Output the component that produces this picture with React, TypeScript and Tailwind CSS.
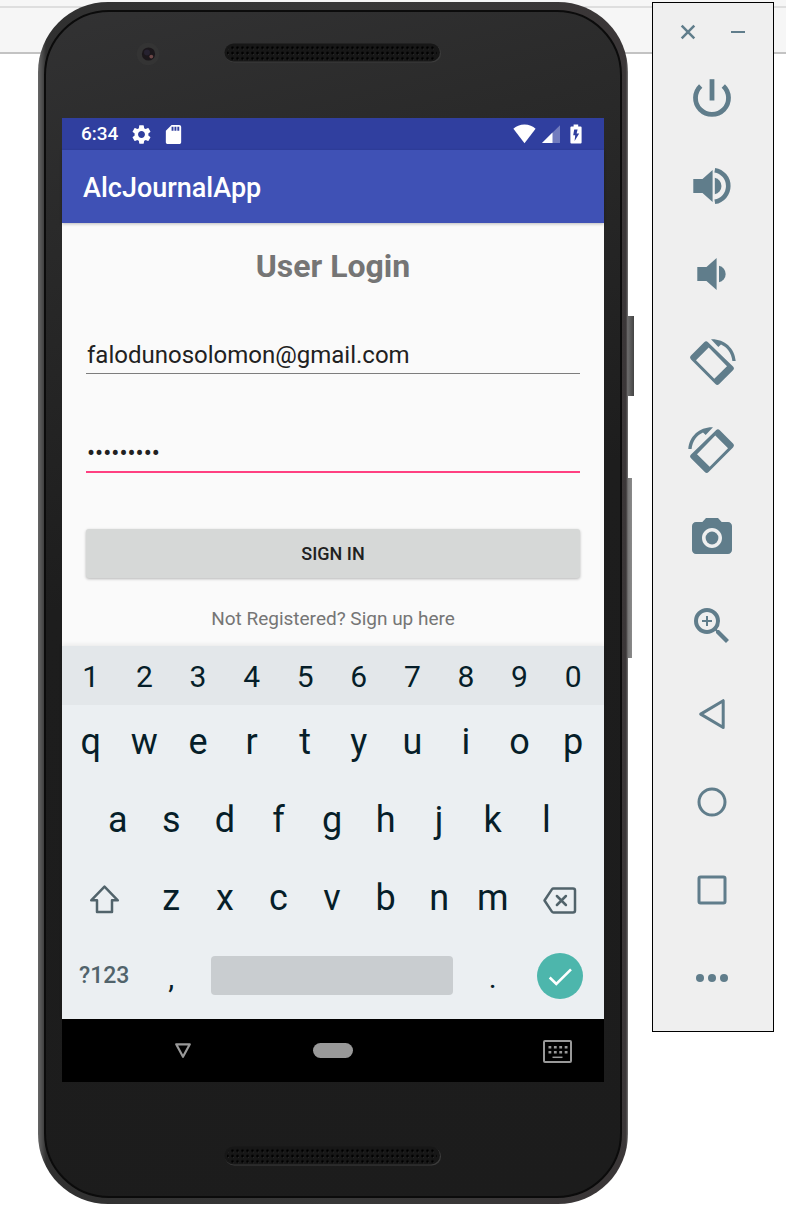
import type { ReactNode } from "react";
import { MdCameraAlt, MdSdCard, MdSettings, MdZoomIn } from "react-icons/md";

function Speaker() {
  return (
    <svg width="218" height="20" viewBox="0 0 218 20" aria-hidden="true">
      <defs>
        <pattern id="mesh" width="5" height="5.4" patternUnits="userSpaceOnUse" x="1" y="2">
          <circle cx="2.5" cy="2.7" r="1.3" fill="#000" />
          <circle cx="3.4" cy="3.8" r="0.5" fill="#333" />
        </pattern>
      </defs>
      <rect x="1" y="1.4" width="216" height="18" rx="9" fill="#3c3c3c" />
      <rect x="0.5" y="0.5" width="215.5" height="18" rx="9" fill="#171717" />
      <rect x="3" y="2" width="210" height="16" rx="8" fill="url(#mesh)" />
    </svg>
  );
}

function Camera() {
  return (
    <svg width="24" height="24" viewBox="0 0 24 24" aria-hidden="true">
      <circle cx="12" cy="12" r="11.3" fill="#343434" />
      <circle cx="12.5" cy="12" r="6.6" fill="#1b171b" />
      <circle cx="11" cy="10.5" r="3" fill="#262230" />
      <circle cx="15.3" cy="14.6" r="1.9" fill="#6d4747" />
    </svg>
  );
}

function StatusBar() {
  return (
    <div className="flex h-8 items-center bg-[#303f9f] pl-[19px] pr-[22px] text-white">
      <span className="text-[19px] font-medium leading-6">6:34</span>
      <MdSettings size={23} className="ml-3" aria-hidden="true" />
      <MdSdCard size={23} className="ml-[9px]" aria-hidden="true" />
      <div className="ml-auto flex items-center gap-[6px]">
        <svg width="23" height="20" viewBox="0 0 23 20" aria-hidden="true">
          <path d="M11.5 0.6C7 .6 3 2.200 .4 4.800L11.500 19.200 22.600 4.800C20 2.200 16 .600 11.500 .600z" fill="#fff" />
        </svg>
        <svg width="18" height="20" viewBox="0 0 18 20" aria-hidden="true">
          <path d="M18 1.200V19H0z" fill="#fff" fillOpacity=".32" />
          <path d="M10.500 8.600V19H0z" fill="#fff" />
        </svg>
        <svg className="ml-1" width="12" height="20" viewBox="0 0 12 20" aria-hidden="true">
          <path d="M3.600 0.500h4.600v2H10.600q1 0 1 1V18.500q0 1-1 1H1.400q-1 0-1-1V3.500q0-1 1-1H3.600z" fill="#fff" />
          <path d="M7.600 5.500H4.200L3.200 11.300H5.200L4.600 17 9.200 9.600H6.600z" fill="#303f9f" />
        </svg>
      </div>
    </div>
  );
}

function LoginForm() {
  return (
    <form className="flex flex-col bg-[#fafafa] px-6 pb-[15px] pt-6" onSubmit={(e) => e.preventDefault()}>
      <h1 className="text-center text-[32px] font-bold leading-[38px] text-[#757575]">User Login</h1>
      <input
        type="email"
        aria-label="Email"
        defaultValue="falodunosolomon@gmail.com"
        className="mt-[51px] h-[38px] w-full rounded-none border-b border-[#7d7d7d] bg-transparent pl-px text-2xl text-[#212121] outline-none"
      />
      <input
        type="password"
        aria-label="Password"
        defaultValue="solomon12"
        className="mt-[61px] h-[38px] w-full rounded-none border-b-2 border-[#ff4081] bg-transparent pl-px text-2xl text-[#212121] outline-none"
      />
      <button
        type="submit"
        className="mt-14 h-[49px] w-full rounded-[3px] bg-[#d6d8d7] text-lg font-medium text-[#212121] shadow-[0_1px_3px_rgba(0,0,0,0.28)]"
      >
        SIGN IN
      </button>
      <a href="#signup" className="mt-[29px] self-center text-[19px] leading-6 text-[#757575]">
        Not Registered? Sign up here
      </a>
    </form>
  );
}

function Key({ label }: { label: string }) {
  return (
    <button type="button" className="h-full min-w-0 flex-1">
      {label}
    </button>
  );
}

function Keyboard() {
  return (
    <div className="bg-[#ebeff2] pb-1 text-[36px] leading-none text-[#061e29] shadow-[0_-2px_4px_rgba(0,0,0,0.06)]">
      <div className="flex h-[59px] items-center bg-[#e3e7ea] pb-px pl-[2px] pr-1 pt-1 text-[30px]">
        {"1234567890".split("").map((k) => (
          <Key key={k} label={k} />
        ))}
      </div>
      <div className="flex h-[76px] pb-[2px] pl-[2px] pr-1">
        {"qwertyuiop".split("").map((k) => (
          <Key key={k} label={k} />
        ))}
      </div>
      <div className="flex h-[78px] pl-[29px] pr-[31px]">
        {"asdfghjkl".split("").map((k) => (
          <Key key={k} label={k} />
        ))}
      </div>
      <div className="flex h-[78px] pl-[2px] pr-1">
        <button type="button" aria-label="Shift" className="flex w-[15%] items-center justify-center">
          <svg width="40" height="40" viewBox="0 0 40 40" fill="none" stroke="#51636b" strokeWidth="2.500" strokeLinejoin="round">
            <path d="M20.500 8.700L33.800 22.300H28V34H13V22.300H7.200z" />
          </svg>
        </button>
        {"zxcvbnm".split("").map((k) => (
          <Key key={k} label={k} />
        ))}
        <button type="button" aria-label="Delete" className="flex w-[15%] items-center justify-center">
          <svg width="40" height="40" viewBox="0 1 40 40" fill="none" stroke="#51636b" strokeWidth="2.500" strokeLinejoin="round" strokeLinecap="round">
            <path d="M13.500 11.500H33q2 0 2 2V33.500q0 2-2 2H13.500q-1 0-1.600-.9L4.500 23.500 11.900 12.400q.6-.9 1.600-.9z" />
            <path d="M16.900 19l9 9M25.900 19l-9 9" />
          </svg>
        </button>
      </div>
      <div className="flex h-[78px] pb-px pl-[2px] pr-1">
        <button type="button" className="w-[15%] text-[23px] font-medium text-[#51636b]">
          ?123
        </button>
        <button type="button" className="w-[10%] pt-1 text-[30px]">
          ,
        </button>
        <div className="flex w-1/2 items-center px-[13px]">
          <button type="button" aria-label="Space" className="h-[39px] w-full rounded-[4px] bg-[#c9cdd0]" />
        </div>
        <button type="button" className="w-[10%] pt-1 text-[30px]">
          .
        </button>
        <div className="flex w-[15%] items-center justify-center">
          <button type="button" aria-label="Done" className="flex size-[46px] items-center justify-center rounded-full bg-[#4db6ac]">
            <svg width="46" height="46" viewBox="0 0 46 46" fill="none" stroke="#fff" strokeWidth="2.600">
              <path d="M12.700 24.500L19.300 31 34 16.300" />
            </svg>
          </button>
        </div>
      </div>
    </div>
  );
}

function NavBar() {
  return (
    <div className="grid h-[63px] grid-cols-[1fr_auto_1fr] items-center bg-black pr-px">
      <button type="button" aria-label="Hide keyboard" className="ml-[112px] justify-self-start">
        <svg width="18" height="18" viewBox="0 0 18 18" fill="none" stroke="#999" strokeWidth="2.200" strokeLinejoin="round">
          <path d="M2.200 2.300H15.800L9 14.800z" />
        </svg>
      </button>
      <button type="button" aria-label="Home" className="h-[15px] w-10 rounded-full bg-[#999]" />
      <button type="button" aria-label="Switch keyboard" className="mr-[30px] justify-self-end pt-[2px]">
        <svg width="31" height="25" viewBox="0 0 31 25" fill="none" stroke="#999">
          <rect x="2" y="2" width="27" height="21" rx="1" strokeWidth="2" />
          <path d="M6.500 8.200H26M6.500 13.200H26" strokeWidth="2.600" strokeDasharray="2.800 2.600" />
          <path d="M10.500 18.300H20.500" strokeWidth="1.500" />
        </svg>
      </button>
    </div>
  );
}

function Phone() {
  return (
    <div className="relative min-w-0 flex-1">
      <div className="absolute -right-[6px] top-[314px] h-20 w-2 bg-linear-to-r from-[#777] to-[#444]" />
      <div className="absolute -right-1 top-[476px] h-[180px] w-2 bg-linear-to-r from-[#666] to-[#8a8a8a]" />
      <div className="relative rounded-[70px] bg-[linear-gradient(90deg,#666_0,#4e4e4e_4px,#303030_8px,#383838_50%,#3a3637_582px,#3b3738_588px,#777_590px)] px-[6px] pb-[6px] pt-2">
        <div className="rounded-[65px] border-2 border-[#0b0b0b] bg-[linear-gradient(165deg,#323233_0,#2a2a2a_16%,#1d1d1d_45%,#1c1c1c_100%)] px-4">
          <div className="grid h-[106px] grid-cols-[1fr_auto_1fr] items-start pt-[30px]">
            <div className="pl-[74px]">
              <Camera />
            </div>
            <div className="pt-px">
              <Speaker />
            </div>
          </div>
          <main>
            <StatusBar />
            <header className="relative flex h-[73px] items-center bg-[#3f51b5] px-[21px] pt-[2px] shadow-[0_1px_3px_rgba(0,0,0,0.25)]">
              <span className="text-[27px] font-medium leading-8 text-white">AlcJournalApp</span>
            </header>
            <LoginForm />
            <Keyboard />
            <NavBar />
          </main>
          <div className="flex h-[114px] justify-center pt-16">
            <Speaker />
          </div>
        </div>
      </div>
    </div>
  );
}

const rotatePath = (
  <>
    <path
      fill="currentColor"
      fillRule="evenodd"
      d="M16.200 4.200q1.900-1.900 3.800 0L45 28.400q1.900 1.900 0 3.800L31.200 46q-1.900 1.900-3.800 0L3 21.400q-1.900-1.900 0-3.800zM20.700 9.500L8 22.200 26.300 40.800 39 28.200z"
    />
    <path fill="currentColor" d="M23 1.300C36 .8 46.800 10 47.700 23H44.400C43.600 15.200 39 9.200 33 6.500L30.300 9z" />
  </>
);

const speaker = "M5.300 17H14.500L24.600 8V40L14.500 31H5.300z";

const tools: { label: string; icon: ReactNode }[] = [
  {
    label: "Power",
    icon: (
      <g fill="none" stroke="currentColor" strokeWidth="4.800">
        <path d="M24 5.200V26.500" />
        <path d="M12.700 11.900A16.500 16.500 0 1 0 35.300 11.900" />
      </g>
    ),
  },
  {
    label: "Volume up",
    icon: (
      <>
        <path d={speaker} fill="currentColor" />
        <path d="M26.800 15.700a8.500 8.500 0 0 1 0 16.600z" fill="currentColor" />
        <path d="M26.800 8.200a16 16 0 0 1 0 31.600" fill="none" stroke="currentColor" strokeWidth="4.600" />
      </>
    ),
  },
  {
    label: "Volume down",
    icon: (
      <g transform="translate(4 0)" fill="currentColor">
        <path d={speaker} />
        <path d="M27 15.700a8.500 8.500 0 0 1 0 16.600z" />
      </g>
    ),
  },
  { label: "Rotate left", icon: rotatePath },
  { label: "Rotate right", icon: <g transform="matrix(-1 0 0 1 48 0)">{rotatePath}</g> },
  { label: "Take screenshot", icon: <MdCameraAlt size={48} /> },
  { label: "Zoom", icon: <MdZoomIn size={48} /> },
  {
    label: "Back",
    icon: <path d="M35.200 10.700V37.500L12.700 24.100z" fill="none" stroke="currentColor" strokeWidth="3" strokeLinejoin="round" />,
  },
  { label: "Home", icon: <circle cx="24" cy="24" r="13" fill="none" stroke="currentColor" strokeWidth="3" /> },
  {
    label: "Overview",
    icon: <rect x="11" y="11" width="26" height="26" rx="1.500" fill="none" stroke="currentColor" strokeWidth="3" />,
  },
  {
    label: "More",
    icon: (
      <g fill="currentColor">
        <circle cx="12" cy="24" r="4" />
        <circle cx="24" cy="24" r="4" />
        <circle cx="36" cy="24" r="4" />
      </g>
    ),
  },
];

function Toolbar() {
  return (
    <aside className="flex w-[122px] shrink-0 flex-col items-center border border-black bg-[#efefef] pb-[29px] pr-[2px] pt-[21px] text-[#607d8b]">
      <div className="flex gap-[34px] pl-[2px]">
        <button type="button" aria-label="Close">
          <svg width="16" height="16" viewBox="0 0 16 16" stroke="currentColor" strokeWidth="2.500">
            <path d="M1.700 1.700L14.300 14.300M14.300 1.700L1.700 14.300" />
          </svg>
        </button>
        <button type="button" aria-label="Minimize">
          <svg width="16" height="16" viewBox="0 0 16 16" stroke="currentColor" strokeWidth="2">
            <path d="M1 8H15" />
          </svg>
        </button>
      </div>
      <div className="mt-[34px] flex flex-col gap-10">
        {tools.map((t) => (
          <button key={t.label} type="button" aria-label={t.label} className="size-12">
            <svg className="block" width="48" height="48" viewBox="0 0 48 48">
              {t.icon}
            </svg>
          </button>
        ))}
      </div>
    </aside>
  );
}

export default function App() {
  return (
    <div className="flex min-h-screen items-start gap-6 bg-[linear-gradient(#f6f6f6_6px,#dedede_6px,#dedede_8px,#f6f6f6_8px,#f6f6f6_52px,#c3c3c3_52px,#c3c3c3_54px,#fff_54px)] pb-2 pl-[38px] pr-3 pt-[2px] font-['Roboto',sans-serif]">
      <Phone />
      <Toolbar />
    </div>
  );
}
